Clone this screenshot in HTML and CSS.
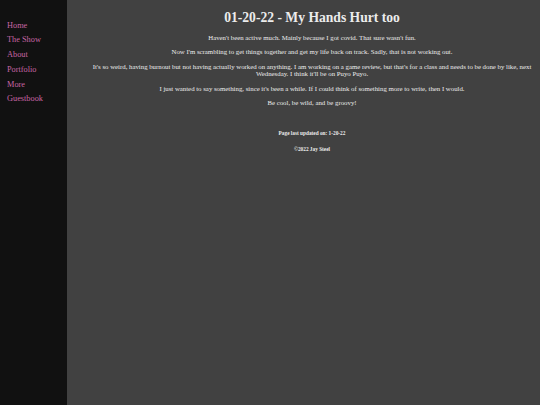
FILE: index.html
```html
<!DOCTYPE html>
<html>
<head>
<meta charset="utf-8">
<title>01-20-22 - My Hands Hurt too</title>
<link rel="stylesheet" href="styles.css">
</head>
<body>
<div class="layout">
  <nav class="sidebar">
    <a class="nav-link" href="#">Home</a>
    <a class="nav-link" href="#">The Show</a>
    <a class="nav-link" href="#">About</a>
    <a class="nav-link" href="#">Portfolio</a>
    <a class="nav-link" href="#">More</a>
    <a class="nav-link" href="#">Guestbook</a>
  </nav>
  <main class="content">
    <h1 class="title">01-20-22 - My Hands Hurt too</h1>
    <p class="para">Haven't been active much. Mainly because I got covid. That sure wasn't fun.</p>
    <p class="para">Now I'm scrambling to get things together and get my life back on track. Sadly, that is not working out.</p>
    <p class="para">It's so weird, having burnout but not having actually worked on anything. I am working on a game review, but that's for a class and needs to be done by like, next Wednesday. I think it'll be on Puyo Puyo.</p>
    <p class="para">I just wanted to say something, since it's been a while. If I could think of something more to write, then I would.</p>
    <p class="para">Be cool, be wild, and be groovy!</p>
    <footer class="foot">
      <p class="foot-line">Page last updated on: 1-20-22</p>
      <p class="foot-line">©2022 Jay Steel</p>
    </footer>
  </main>
</div>
</body>
</html>
```
FILE: styles.css
```css
html, body {
  margin: 0;
  padding: 0;
  height: 100%;
}
body {
  background: #414141;
  color: #ececec;
  font-family: "Liberation Serif", "Times New Roman", serif;
}
.layout {
  display: flex;
  min-height: 100%;
}
.sidebar {
  width: 67px;
  flex: none;
  background: #111111;
  display: flex;
  flex-direction: column;
  padding: 18.5px 0 0 7px;
  box-sizing: border-box;
}
.nav-link {
  display: block;
  color: #c866a6;
  text-decoration: none;
  font-size: 8.3px;
  line-height: 14.8px;
  white-space: nowrap;
}
.content {
  flex: 1;
  padding: 0 0 0 17px;
  text-align: center;
}
.title {
  font-size: 13.6px;
  font-weight: bold;
  margin: 9px 0 8px;
  line-height: 17px;
}
.para {
  font-size: 6.8px;
  line-height: 7.7px;
  margin: 6.6px 0;
}
.foot {
  margin-top: 23px;
}
.foot-line {
  font-size: 5.3px;
  font-weight: bold;
  margin: 10px 0;
  line-height: 6.5px;
}
```
